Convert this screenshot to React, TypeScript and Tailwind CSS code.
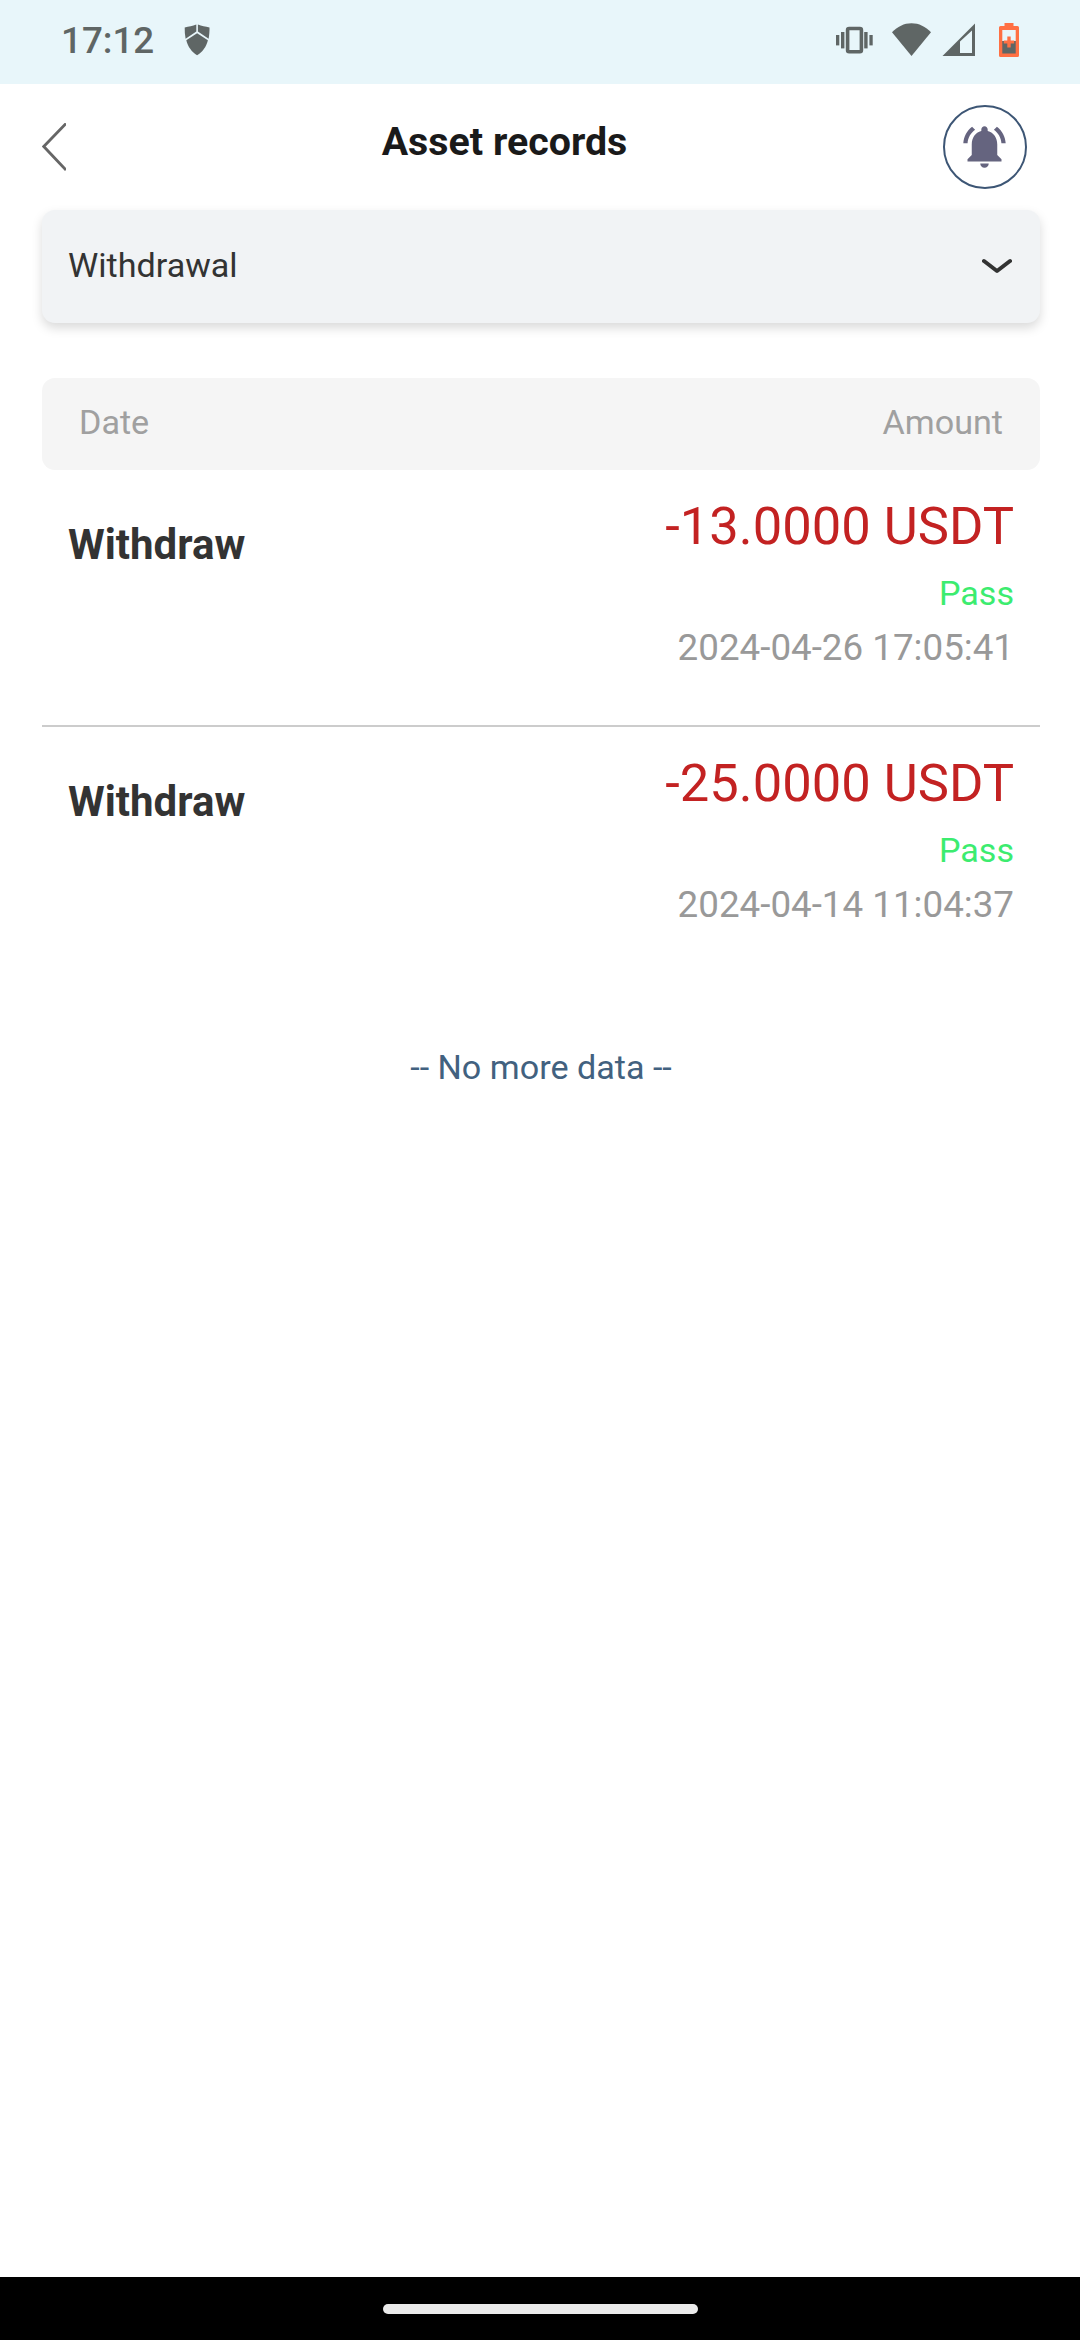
import { useState } from "react";

const records = [
  {
    type: "Withdraw",
    amount: "-13.0000 USDT",
    status: "Pass",
    date: "2024-04-26 17:05:41",
  },
  {
    type: "Withdraw",
    amount: "-25.0000 USDT",
    status: "Pass",
    date: "2024-04-14 11:04:37",
  },
];

function StatusBar() {
  return (
    <div className="flex h-[84px] items-center justify-between bg-[#e8f6fa] pl-[61px] pr-[61px] text-[#5f6665]">
      <div className="flex items-center">
        <span className="pb-[2px] text-[36.75px] leading-none font-medium">17:12</span>
        {/* Shield */}
        <svg className="mb-1 ml-[30px] h-[32px] w-[26px]" viewBox="0 0 26 32" fill="currentColor">
          <path d="M12.3 0.6v6.9L1.6 14.7C0.9 11 0.6 7 0.7 3.4 4.8 2.9 8.6 2 12.3 0.6z" />
          <path d="M13.9 0.6v6.9l10.7 7.2c.7-3.7 1-7.7.9-11.3-4.1-.5-7.9-1.4-11.6-2.8z" />
          <path d="M13.1 9.2l10.8 7.1C22.2 23 18.4 28.2 13.1 31.3 7.8 28.2 4 23 2.3 16.3z" />
        </svg>
      </div>

      <div className="flex items-center pb-[4px]">
        {/* Vibrate */}
        <svg className="h-[28px] w-[38px]" viewBox="0 0 38 28" fill="currentColor">
          <rect x="0" y="9" width="3.3" height="10.4" />
          <rect x="5" y="6" width="3.4" height="16.4" />
          <rect x="11.6" y="2.5" width="13.8" height="23.2" rx="1.5" fill="none" stroke="currentColor" strokeWidth="3.6" />
          <rect x="28.2" y="6" width="3.4" height="16.4" />
          <rect x="33.4" y="9" width="3.3" height="10.4" />
        </svg>
        {/* Wifi */}
        <svg className="ml-[18px] h-[34px] w-[40px]" viewBox="0 0 40 34" fill="currentColor">
          <path d="M19.5 33L0 9.3C5.5 3.5 12 0.2 19.5 0.2S33.5 3.5 39 9.3z" />
        </svg>
        {/* Mobile signal */}
        <svg className="ml-[10px] h-[34px] w-[34px]" viewBox="0 0 34 34" fill="currentColor">
          <path fillRule="evenodd" d="M0.5 33H33V0.5zM18 30V18.5L30 7.5V30z" />
        </svg>
        {/* Battery saver */}
        <svg className="ml-[23px] h-[34px] w-[20px]" viewBox="0 0 20 34">
          <path d="M3 18h14v13H3z" fill="currentColor" />
          <path
            fillRule="evenodd"
            fill="#ff7043"
            d="M5.5 0h9v3H18.5Q20 3 20 4.5V32.5Q20 34 18.5 34H1.5Q0 34 0 32.5V4.5Q0 3 1.5 3H5.5zM3.3 7v23.5h13.4V7z"
          />
          <path d="M8.3 13.5h3.4v4h3.5v3h-3.5v4H8.3v-4H4.8v-3h3.5z" fill="#ff7043" />
        </svg>
      </div>
    </div>
  );
}

function Header() {
  return (
    <header className="flex h-[126px] items-center justify-between pl-[42px] pr-[53px]">
      <button aria-label="Back">
        <svg className="h-[48px] w-[24px]" viewBox="0 0 24 48" fill="none" stroke="#666666" strokeWidth="2.8">
          <path d="M24 0.5L1.8 23.5 24 47" />
        </svg>
      </button>
      <h1 className="pb-[10px] text-[39.375px] leading-[46px] font-bold text-[#1a1a1a]">Asset records</h1>
      <button
        aria-label="Notifications"
        className="flex size-[84px] items-center justify-center rounded-full border-2 border-[#3d5675]"
      >
        <svg className="mb-[2px] size-[51px]" viewBox="0 0 24 24" fill="#65647f">
          <path d="M7.58 4.08L6.15 2.65C3.75 4.48 2.17 7.3 2.03 10.5h2c.15-2.65 1.51-4.97 3.55-6.42zM19.97 10.5h2c-.15-3.2-1.73-6.02-4.12-7.85l-1.42 1.43c2.02 1.45 3.39 3.77 3.54 6.42zM18 11c0-3.07-1.64-5.64-4.5-6.32V4c0-.83-.67-1.5-1.5-1.5s-1.5.67-1.5 1.5v.68C7.63 5.36 6 7.92 6 11v5l-2 2v1h16v-1l-2-2v-5zM12 22c1.1 0 2-.9 2-2h-4c0 1.1.9 2 2 2z" />
        </svg>
      </button>
    </header>
  );
}

export default function App() {
  const [filter] = useState("Withdrawal");

  return (
    <div className="flex h-[2340px] w-[1080px] flex-col bg-white font-['Roboto',sans-serif]">
      <StatusBar />
      <Header />

      <main className="flex-1 pr-[40px] pl-[42px]">
        {/* Filter */}
        <button className="flex h-[113px] w-full items-center justify-between rounded-[13px] bg-[#f1f3f5] pr-[28px] pb-[2px] pl-[26px] text-[34.125px] text-[#333333] shadow-[0_5px_11px_rgba(0,0,0,0.15)]">
          <span>{filter}</span>
          <svg className="h-[16px] w-[30px]" viewBox="0 0 30 16" fill="none" stroke="#333333" strokeWidth="4" strokeLinecap="round">
            <path d="M2 3L15 13 28 3" strokeLinejoin="round" />
          </svg>
        </button>

        {/* Table head */}
        <div className="mt-[55px] flex h-[92px] items-center justify-between rounded-[13px] bg-[#f5f5f5] px-[37px] pb-[3px] text-[34.125px] text-[#a0a0a0]">
          <span>Date</span>
          <span>Amount</span>
        </div>

        {/* Rows */}
        {records.map((record) => (
          <div
            key={record.date}
            className="flex h-[257px] justify-between border-b-2 border-[#cccccc] pr-[26px] pl-[26px] last-of-type:border-transparent"
          >
            <div className="pt-[50px] text-[42px] leading-[50px] font-bold text-[#333333]">{record.type}</div>
            <div className="pt-[26px] text-right">
              <p className="text-[52.5px] leading-[60px] text-[#c32222]">{record.amount}</p>
              <p className="mt-[17px] text-[34.125px] leading-[40px] text-[#3cec6f]">{record.status}</p>
              <p className="mt-[13px] text-[36.75px] leading-[44px] text-[#999999]">{record.date}</p>
            </div>
          </div>
        ))}

        <p className="pt-[63px] text-center text-[34.125px] leading-[40px] text-[#42617f]">-- No more data --</p>
      </main>

      {/* Gesture bar */}
      <div className="flex h-[63px] justify-center bg-black pt-[27px]">
        <div className="h-[10px] w-[315px] rounded-full bg-[#ebebeb]" />
      </div>
    </div>
  );
}
